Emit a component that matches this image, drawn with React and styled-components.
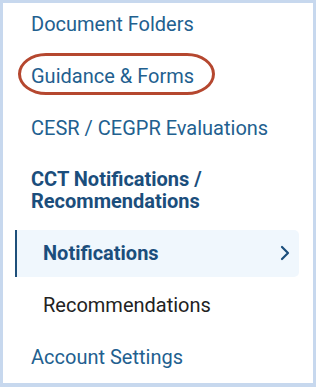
import styled, { createGlobalStyle } from "styled-components";
import { ChevronRight } from "lucide-react";

const GlobalStyle = createGlobalStyle`
  html, body {
    margin: 0;
    padding: 0;
    background: #ffffff;
  }
  * {
    box-sizing: border-box;
  }
`;

const Frame = styled.div`
  width: 316px;
  height: 387px;
  overflow: hidden;
  background: #ffffff;
  border: 3px solid #c7d8ee;
  border-bottom-width: 4px;
  font-family: Roboto, "Liberation Sans", Arial, sans-serif;
  font-size: 20px;
`;

const NavList = styled.nav`
  display: flex;
  flex-direction: column;
  gap: 5px;
  margin-top: -2px;
  padding: 0 14px 0 12px;
`;

const NavItem = styled.a`
  position: relative;
  display: block;
  padding: 11px 0 12px 16px;
  line-height: 24px;
  color: #22608f;
  text-decoration: none;
`;

const GroupTitle = styled.div`
  padding: 11px 0 13px 16px;
  line-height: 22px;
  font-weight: 700;
  color: #1b4e7c;
`;

const SubItem = styled.a`
  display: flex;
  align-items: center;
  justify-content: space-between;
  padding: 11px 2px 12px 26px;
  line-height: 24px;
  text-decoration: none;
  border-left: 2px solid ${({ $active }) => ($active ? "#1d4f7a" : "transparent")};
  border-radius: 0 5px 5px 0;
  background: ${({ $active }) => ($active ? "#f0f7fd" : "transparent")};
  color: ${({ $active }) => ($active ? "#1b4e7c" : "#222222")};
  font-weight: ${({ $active }) => ($active ? 700 : 400)};

  svg {
    flex-shrink: 0;
    color: #1b4e7c;
  }
`;

const Highlight = styled.span`
  position: absolute;
  left: 3px;
  top: 0;
  width: 197px;
  height: 42px;
  border: 3px solid #b5472f;
  border-radius: 28px / 21px;
  pointer-events: none;
`;

export default function App() {
  return (
    <>
      <GlobalStyle />
      <Frame>
        <NavList>
          <NavItem href="#">Document Folders</NavItem>
          <NavItem href="#">
            Guidance &amp; Forms
            <Highlight />
          </NavItem>
          <NavItem href="#">CESR / CEGPR Evaluations</NavItem>
          <GroupTitle>
            CCT Notifications /
            <br />
            Recommendations
          </GroupTitle>
          <SubItem href="#" $active>
            Notifications
            <ChevronRight size={24} strokeWidth={2.2} />
          </SubItem>
          <SubItem href="#">Recommendations</SubItem>
          <NavItem href="#">Account Settings</NavItem>
        </NavList>
      </Frame>
    </>
  );
}
